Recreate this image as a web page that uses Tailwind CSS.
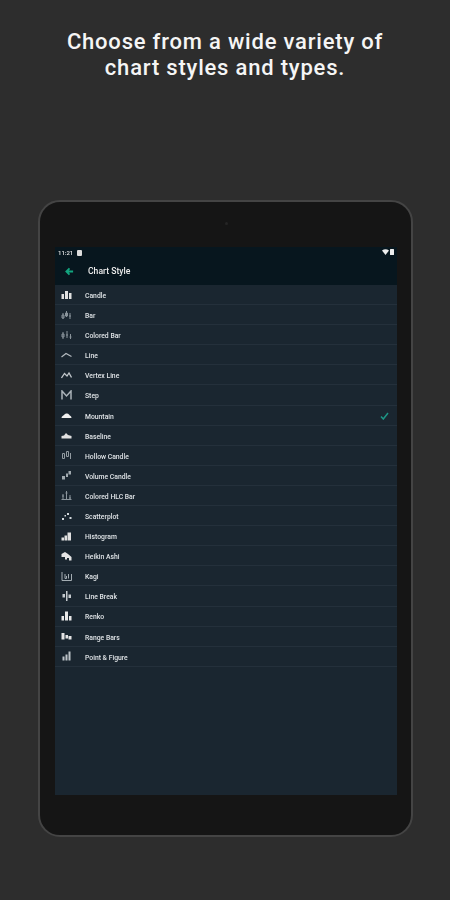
<!DOCTYPE html>
<html><head><meta charset="utf-8"><script src="https://cdn.jsdelivr.net/npm/@tailwindcss/browser@4"></script></head>
<body class="w-[450px] h-[900px] overflow-hidden bg-[#2d2d2d] font-['Roboto',sans-serif]">
<div class="flex flex-col items-center pt-[29px] h-[200px]">
<h1 class="text-[22px] leading-[26px] font-medium text-[#f5f5f5] text-center tracking-[0.8px]">Choose from a wide variety of<br>chart styles and types.</h1>
</div>
<div class="relative ml-[38px] w-[375px] h-[637px] rounded-[22px] border-2 border-[#444444] bg-[#151515] pt-[45px] pl-[15px]">
<div class="absolute left-[185px] top-[20px] w-[3px] h-[3px] rounded-full bg-[#252525]"></div>
<div class="w-[342px] h-[548px] bg-[#1a2630] flex flex-col">
<div class="h-[15px] bg-[#07161e] flex items-start justify-between pt-[2px] pl-[3px] pr-[3px] text-[6px] leading-[7px] font-medium text-[#e8e8e8] blur-[0.35px]">
<div class="flex items-center gap-[4px]"><span>11:21</span><svg width="5" height="6" viewBox="0 0 5 6"><rect width="5" height="6" rx="1" fill="#ddd"/></svg></div>
<div class="flex items-center gap-[1px]"><svg width="7" height="6" viewBox="0 0 7 6"><path d="M0 1.500Q3.500-1 7 1.500L3.500 6Z" fill="#eee"/></svg><svg width="4" height="6" viewBox="0 0 4 6"><rect width="4" height="6" rx=".5" fill="#eee"/></svg></div>
</div>
<div class="h-[23px] bg-[#07161e] flex items-center pl-[10px] gap-[14px] pb-[4px]">
<svg class="w-[9px] h-[9px] blur-[0.3px]" viewBox="0 0 10 10" fill="none" stroke="#12a57f" stroke-width="2"><path d="M9 5H2M5 1.500 1.500 5 5 8.500"/></svg>
<span class="text-[8.6px] font-medium text-[#ececec] blur-[0.35px]">Chart Style</span>
</div>
<div class="flex flex-col text-[6.8px] text-[#dfe3e6] font-medium blur-[0.4px]">

<div class="h-[20.1px] flex items-center border-b border-[#24303b] pl-[6px]"><svg class="w-[11px] h-[10px] mr-[13px]" viewBox="0 0 11 10" fill="#e0e0e0"><path d="M.5 4h2.500v5H.5zM4 1h3v8H4zM8 3h2.500v6H8z"/></svg><span class="pt-[3px]">Candle</span></div>

<div class="h-[20.1px] flex items-center border-b border-[#24303b] pl-[6px]"><svg class="w-[11px] h-[10px] mr-[13px]" viewBox="0 0 11 10" fill="none" stroke="#8a949b" stroke-width="1"><path d="M2 3v6M5.500 1v6M9 3v6M1 5h2M4.500 3h2M8 6h2M1 5v3h2V5M4.500 3v3h2V3"/></svg><span class="pt-[3px]">Bar</span></div>

<div class="h-[20.1px] flex items-center border-b border-[#24303b] pl-[6px]"><svg class="w-[11px] h-[10px] mr-[13px]" viewBox="0 0 11 10" fill="none" stroke="#8a949b" stroke-width="1"><path d="M2 2v7M1 4h2M1 4v3h2V4M6 1v7M5 5h2M9.500 4v5M8.500 7h2"/></svg><span class="pt-[3px]">Colored Bar</span></div>

<div class="h-[20.1px] flex items-center border-b border-[#24303b] pl-[6px]"><svg class="w-[11px] h-[10px] mr-[13px]" viewBox="0 0 11 10" fill="none" stroke="#b4bbc0" stroke-width="1.200"><path d="M.5 7 5 3.500l5.500 3"/></svg><span class="pt-[3px]">Line</span></div>

<div class="h-[20.1px] flex items-center border-b border-[#24303b] pl-[6px]"><svg class="w-[11px] h-[10px] mr-[13px]" viewBox="0 0 11 10" fill="none" stroke="#c0c6ca" stroke-width="1.300"><path d="M.5 8 3.500 3.500 6 6l2-3 2.500 4.500"/></svg><span class="pt-[3px]">Vertex Line</span></div>

<div class="h-[20.1px] flex items-center border-b border-[#24303b] pl-[6px]"><svg class="w-[11px] h-[10px] mr-[13px]" viewBox="0 0 11 10" fill="none" stroke="#aab2b8" stroke-width="1.500"><path d="M1 9.500V1L5.500 6 10 1v8.500"/></svg><span class="pt-[3px]">Step</span></div>

<div class="h-[20.1px] flex items-center border-b border-[#24303b] pl-[6px] relative"><svg class="w-[11px] h-[10px] mr-[13px]" viewBox="0 0 11 10" fill="#f0f0f0"><path d="M.5 8c0-2 2-2.500 3-3.500S7 3 8 4.500s2.500 1.500 2.500 3.500z"/></svg><span class="pt-[3px]">Mountain</span><svg class="absolute right-[8px] top-[6px] w-[9px] h-[8px]" viewBox="0 0 9 8" fill="none" stroke="#1d9585" stroke-width="1.500"><path d="M1 4.500 3.300 7 8 1"/></svg></div>

<div class="h-[20.1px] flex items-center border-b border-[#24303b] pl-[6px]"><svg class="w-[11px] h-[10px] mr-[13px]" viewBox="0 0 11 10" fill="#e0e0e0"><path d="M.5 8.500V6L3 5.500 5 3l2 2 3.500 1v2.500z"/></svg><span class="pt-[3px]">Baseline</span></div>

<div class="h-[20.1px] flex items-center border-b border-[#24303b] pl-[6px]"><svg class="w-[11px] h-[10px] mr-[13px]" viewBox="0 0 11 10" fill="none" stroke="#929ba1" stroke-width="1"><path d="M1.500 3.500h2v5h-2zM5.500 1.500h2v5h-2zM9.500 3v6"/></svg><span class="pt-[3px]">Hollow Candle</span></div>

<div class="h-[20.1px] flex items-center border-b border-[#24303b] pl-[6px]"><svg class="w-[11px] h-[10px] mr-[13px]" viewBox="0 0 11 10" fill="#a0a9af"><path d="M1 6h3v3.500H1zM5 3.500h2V7H5zM7.500 1H10v3.500H7.500z"/></svg><span class="pt-[3px]">Volume Candle</span></div>

<div class="h-[20.1px] flex items-center border-b border-[#24303b] pl-[6px]"><svg class="w-[11px] h-[10px] mr-[13px]" viewBox="0 0 11 10" fill="none" stroke="#8a949b" stroke-width="1"><path d="M2 4v5M1 6h2M5.500 1v8M4.500 3h2M9 5v4M8 8h2M.5 9.500h10"/></svg><span class="pt-[3px]">Colored HLC Bar</span></div>

<div class="h-[20.1px] flex items-center border-b border-[#24303b] pl-[6px]"><svg class="w-[11px] h-[10px] mr-[13px]" viewBox="0 0 11 10" fill="#d2d8dc"><path d="M1 7h2v2H1zM3.500 4H5v1.500H3.500zM6 2h2v2H6zM8.500 6h2v2h-2z"/></svg><span class="pt-[3px]">Scatterplot</span></div>

<div class="h-[20.1px] flex items-center border-b border-[#24303b] pl-[6px]"><svg class="w-[11px] h-[10px] mr-[13px]" viewBox="0 0 11 10" fill="#e0e0e0"><path d="M.5 6.500H3V9.500H.5zM3.500 4.500H6v5H3.500zM6.500 1.500H10v8H6.500z"/></svg><span class="pt-[3px]">Histogram</span></div>

<div class="h-[20.1px] flex items-center border-b border-[#24303b] pl-[6px]"><svg class="w-[11px] h-[10px] mr-[13px]" viewBox="0 0 11 10" fill="#e4e4e4"><path d="M.5 3 4 1l3 2 3.500 3v3.500H8V7H6v1.500H4V6H.5z"/></svg><span class="pt-[3px]">Heikin Ashi</span></div>

<div class="h-[20.1px] flex items-center border-b border-[#24303b] pl-[6px]"><svg class="w-[11px] h-[10px] mr-[13px]" viewBox="0 0 11 10" fill="none" stroke="#a4adb3" stroke-width="1"><path d="M1 1v8.500h9.500V3M4 3v4.500h1.500V5M7.500 3v4.500"/></svg><span class="pt-[3px]">Kagi</span></div>

<div class="h-[20.1px] flex items-center border-b border-[#24303b] pl-[6px]"><svg class="w-[11px] h-[10px] mr-[13px]" viewBox="0 0 11 10" fill="#c4cace"><path d="M5 0h1.500v10H5zM1.500 3h2.500v3.500H1.500zM7.500 3.500H10V7H7.500z"/></svg><span class="pt-[3px]">Line Break</span></div>

<div class="h-[20.1px] flex items-center border-b border-[#24303b] pl-[6px]"><svg class="w-[11px] h-[10px] mr-[13px]" viewBox="0 0 11 10" fill="#e8e8e8"><path d="M.5 5H3L3 9.500H.5zM4 .5h3v9H4zM8 5h2.500v4.500H8z"/></svg><span class="pt-[3px]">Renko</span></div>

<div class="h-[20.1px] flex items-center border-b border-[#24303b] pl-[6px]"><svg class="w-[11px] h-[10px] mr-[13px]" viewBox="0 0 11 10" fill="#e4e4e4"><path d="M.5 2h3v6.500h-3zM4.500 4H7v3.500H4.500zM7.500 5h3v3.500h-3z"/></svg><span class="pt-[3px]">Range Bars</span></div>

<div class="h-[20.1px] flex items-center border-b border-[#24303b] pl-[6px]"><svg class="w-[11px] h-[10px] mr-[13px]" viewBox="0 0 11 10" fill="#bcc3c8"><path d="M1.500 5.500h2v4h-2zM4.500 3.500h2v6h-2zM7.500 .5h2v9h-2z"/></svg><span class="pt-[3px]">Point &amp; Figure</span></div>

</div>
</div>
</div>
</body></html>
